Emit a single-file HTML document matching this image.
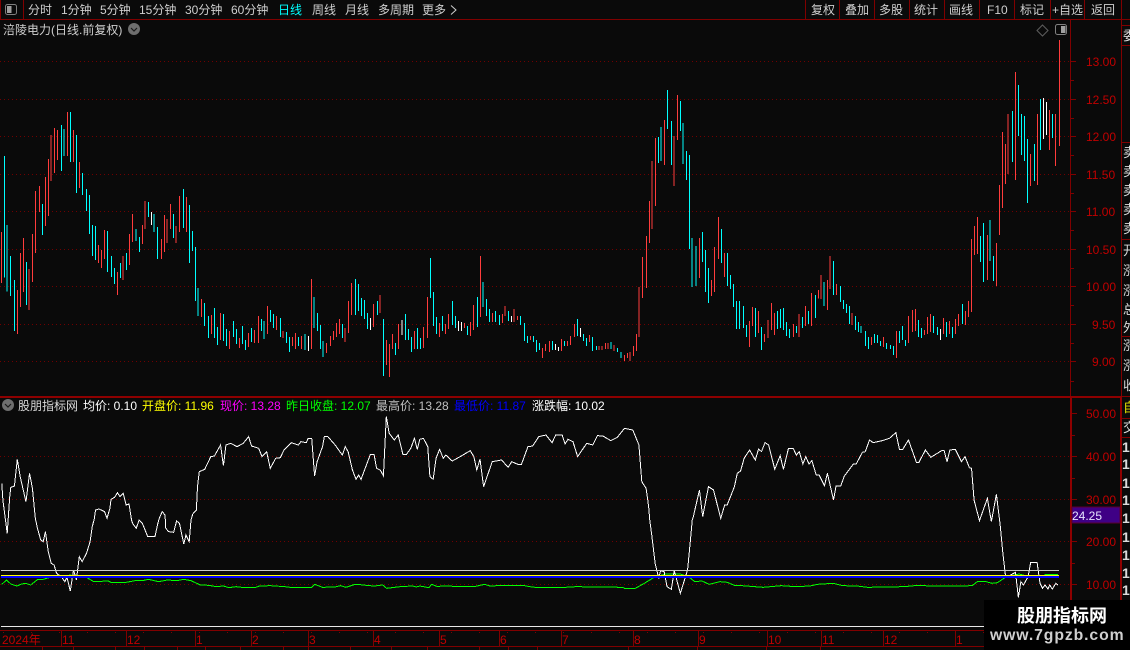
<!DOCTYPE html>
<html lang="zh"><head><meta charset="utf-8"><title>涪陵电力</title>
<style>
html,body{margin:0;padding:0;background:#0a0a0a;width:1130px;height:650px;overflow:hidden}
svg{display:block}
text{font-family:"Liberation Sans","WenQuanYi Zen Hei","Noto Sans CJK SC",sans-serif;font-size:12px;white-space:pre}
.m text{fill:#cfcfcf}
.a text{fill:#c00000}
.s text{fill:#dcdcdc;font-size:13px}
.l{shape-rendering:crispEdges;fill:none}
.c{shape-rendering:crispEdges;fill:none;stroke-width:1;vector-effect:non-scaling-stroke}
</style></head><body>
<svg width="1130" height="650" viewBox="0 0 1130 650" xmlns="http://www.w3.org/2000/svg">
<rect width="1130" height="650" fill="#0a0a0a"/>

<!-- grid -->
<path class="l" stroke="#700000" stroke-dasharray="1 3" d="M0 61.5H1070M0 99.5H1070M0 136.5H1070M0 174.5H1070M0 211.5H1070M0 249.5H1070M0 286.5H1070M0 324.5H1070M0 361.5H1070M0 456.5H1070M0 499.5H1070M0 541.5H1070M0 584.5H1070"/>

<!-- frame lines -->
<path class="l" stroke="#800000" d="M0 19.5H1130M0.5 0V19M23.5 0V19M805.5 0V19M839.5 0V19M874.5 0V19M909.5 0V19M944.5 0V19M979.5 0V19M1014.5 0V19M1050.5 0V19M1084.5 0V19M1121.5 0V650M1070.5 19V396M1121 25.5H1130M1121 45.5H1130M1121 142.5H1130M1121 239.5H1130M1121 336.5H1130M1121 396.5H1130M1121 418.5H1130M1121 437.5H1130"/>
<path class="l" stroke="#8e0000" stroke-width="2" d="M0 397H1122M1071 396V630M1121 396V630"/>
<path class="l" stroke="#800000" d="M1071 61.5H1076M1071 99.5H1076M1071 136.5H1076M1071 174.5H1076M1071 211.5H1076M1071 249.5H1076M1071 286.5H1076M1071 324.5H1076M1071 361.5H1076M1071 80.5H1074M1071 118.5H1074M1071 155.5H1074M1071 193.5H1074M1071 230.5H1074M1071 268.5H1074M1071 305.5H1074M1071 343.5H1074M1071 381.5H1074M1072 413.5H1077M1072 456.5H1077M1072 499.5H1077M1072 541.5H1077M1072 584.5H1077M1072 435.5H1075M1072 478.5H1075M1072 520.5H1075M1072 563.5H1075M1072 606.5H1075"/>

<!-- top menu -->
<rect x="5.5" y="4.5" width="11" height="10" rx="2" fill="none" stroke="#808080"/>
<rect x="7" y="6" width="4.5" height="7" fill="#a0a0a0"/>
<g class="m">
<text x="28" y="14">分时</text>
<text x="61" y="14">1分钟</text>
<text x="100" y="14">5分钟</text>
<text x="139" y="14">15分钟</text>
<text x="185" y="14">30分钟</text>
<text x="231" y="14">60分钟</text>
<text x="278" y="14" style="fill:#00ffff">日线</text>
<text x="312" y="14">周线</text>
<text x="345" y="14">月线</text>
<text x="378" y="14">多周期</text>
<text x="422" y="14">更多</text>
<path d="M451 5.5L456 10L451 14.5" fill="none" stroke="#cfcfcf"/>
<text x="811" y="14">复权</text>
<text x="845" y="14">叠加</text>
<text x="879" y="14">多股</text>
<text x="914" y="14">统计</text>
<text x="949" y="14">画线</text>
<text x="987" y="14">F10</text>
<text x="1020" y="14">标记</text>
<text x="1052" y="14">+自选</text>
<text x="1091" y="14">返回</text>
</g>

<!-- stock title -->
<text x="3" y="34" fill="#cfcfcf">涪陵电力(日线.前复权)</text>
<circle cx="134" cy="29" r="6" fill="#6e6e6e"/><path d="M131 28L134 31L137 28" fill="none" stroke="#1a1a1a" stroke-width="1.2"/>
<path d="M1042.5 25L1048 30.5L1042.5 36L1037 30.5Z" fill="none" stroke="#5e5e5e"/>
<rect x="1055.5" y="24.5" width="11" height="10" rx="2" fill="none" stroke="#808080"/>
<rect x="1061" y="26" width="4.5" height="7" fill="#a0a0a0"/>

<!-- price labels -->
<g class="a">
<text x="1086" y="66">13.00</text><text x="1086" y="104">12.50</text><text x="1086" y="141">12.00</text><text x="1086" y="179">11.50</text><text x="1086" y="216">11.00</text><text x="1086" y="254">10.50</text><text x="1086" y="291">10.00</text><text x="1092" y="329">9.50</text><text x="1092" y="366">9.00</text>
<text x="1086" y="418">50.00</text><text x="1086" y="461">40.00</text><text x="1086" y="504">30.00</text><text x="1086" y="546">20.00</text><text x="1086" y="589">10.00</text>
</g>

<!-- candles left -->
<g transform="translate(0 200) scale(.36036 .33333)">
<path class="c" stroke="#ff3c3c" d="M4 96V249M48 270V402M57 159V321M65 114V276M81 207V330M90 102V246M98 -27V159M109 -42V36M126 -69V78M134 -123V48M142 -195V-57M151 -216V-81M159 -210V-120M187 -264V-132M204 -210V-114M220 -114V-36M273 135V189M281 150V204M290 90V177M326 216V285M342 168V240M360 102V195M367 42V126M395 75V132M403 3V87M448 117V177M456 45V156M464 57V129M473 12V87M489 78V129M498 -12V96M517 -9V96M559 297V351M587 345V402M612 339V420M637 393V447M664 414V444M689 399V441M706 390V429M717 348V429M742 318V402M767 348V390M786 393V414M811 411V438M820 399V447M836 408V447M864 237V447M906 429V459M917 408V438M925 393V420M934 369V411M942 357V402M958 384V426M967 303V399M975 249V345M1036 312V381M1055 285V339M1072 420V495M1081 432V531M1089 402V447M1106 372V447M1150 393V447M1175 381V444M1186 291V414M1219 369V411M1236 372V402M1245 342V387M1289 369V384M1305 366V408M1314 315V390M1333 168V351M1366 339V366M1394 342V369M1402 318V348M1427 327V366M1436 348V360M1472 408V420M1505 444V474M1514 432V453M1525 423V456M1558 417V453"/>
<path class="c" stroke="#00ffff" d="M12 -132V233M20 75V275M29 168V288M40 240V393M73 186V315M118 12V105M170 -225V-87M178 -213V-132M195 -264V-114M212 -195V-21M229 -81V-15M240 -33V33M248 -15V102M256 75V168M265 78V180M298 93V216M309 168V231M318 204V252M334 189V234M351 159V210M378 87V123M387 111V156M412 6V51M428 42V96M437 81V177M481 42V114M509 -33V84M526 15V189M534 93V153M543 141V303M550 264V348M567 309V378M578 348V414M595 324V414M603 381V435M620 342V423M628 387V438M648 363V411M656 387V432M673 378V432M681 420V450M698 384V426M725 357V393M733 363V417M750 330V366M759 342V384M778 354V411M795 396V429M803 411V456M828 411V438M847 402V450M872 291V384M881 339V393M889 375V447M897 423V471M950 372V414M986 237V345M995 252V333M1003 294V348M1011 300V357M1020 339V387M1047 303V345M1064 357V528M1097 429V465M1125 342V420M1133 387V420M1142 411V456M1159 384V447M1167 414V447M1194 174V294M1203 276V378M1211 351V402M1228 348V393M1255 303V375M1264 348V384M1297 378V405M1325 291V381M1341 246V321M1350 297V348M1358 327V366M1375 333V366M1386 345V375M1411 333V363M1444 348V375M1455 369V423M1464 408V429M1481 408V426M1489 420V456M1497 429V450M1533 423V450M1566 423V438"/>
<path class="c" stroke="#ffffff" d="M420 36V75M856 408V453M1028 354V390M1116 360V405M1272 363V393M1280 366V393M1419 348V366M1541 432V450M1550 441V453"/>
</g>
<!-- candles right -->
<g transform="translate(565 200) scale(.36036 .33333)">
<path class="c" stroke="#ff3c3c" d="M7 423V438M15 408V435M26 372V411M68 405V426M95 438V450M103 438V450M112 429V447M120 429V447M136 435V453M165 465V483M173 459V474M181 456V483M190 438V468M198 402V453M206 261V411M215 171V294M226 108V264M234 3V129M242 -117V87M251 -186V18M276 -240V-105M303 -192V-42M312 -315V-180M373 114V234M406 240V288M415 141V276M426 51V177M442 159V231M512 363V441M520 321V378M537 333V399M553 402V426M564 360V414M573 309V390M581 339V405M634 372V411M650 342V411M667 318V378M684 279V378M703 270V295M711 225V297M728 240V330M736 168V267M753 252V285M797 339V375M851 411V435M884 411V441M920 393V474M953 348V429M964 330V396M972 327V393M998 390V405M1006 351V402M1014 342V396M1050 354V402M1067 363V402M1084 357V402M1092 342V378M1111 333V375M1120 303V351M1128 117V336M1136 78V165M1145 51V162M1172 105V240M1197 129V258M1206 -45V105M1214 -204V24M1222 -168V-48M1230 -258V-78M1250 -384V-60M1292 -138V-42M1311 -258V-45M1344 -270V-150M1361 -258V-102M1372 -480V-162"/>
<path class="c" stroke="#00ffff" d="M34 357V408M51 402V423M59 414V438M76 411V453M87 438V450M128 426V447M145 444V456M156 456V474M259 -189V-111M267 -219V-117M284 -330V-213M295 -237V-105M320 -297V-207M328 -231V-108M337 -147V-60M345 -135V147M353 114V261M364 138V258M381 96V186M390 150V276M398 204V309M434 87V189M451 159V258M459 225V267M467 252V321M476 303V387M484 303V387M495 318V384M503 375V411M528 324V411M545 381V450M590 333V387M598 327V384M606 324V390M615 366V408M623 387V414M642 378V399M659 351V384M676 333V372M695 285V354M719 246V318M745 183V285M764 258V306M773 300V327M781 312V339M789 318V372M806 348V390M814 366V396M822 378V399M834 393V438M842 411V447M859 402V429M867 405V429M876 423V438M892 429V447M903 435V447M911 438V465M928 393V429M936 378V420M945 420V438M981 360V411M989 384V414M1023 348V399M1034 381V405M1059 366V411M1075 381V414M1103 312V372M1153 108V186M1162 69V246M1180 60V183M1189 168V243M1242 -267V-114M1258 -345V-192M1267 -258V-135M1275 -252V-117M1284 -183V9M1303 -168V-57M1320 -303V-150M1353 -258V-186"/>
<path class="c" stroke="#ffffff" d="M43 384V411M1042 387V420M1328 -306V-183M1336 -294V-195"/>
</g>

<!-- indicator title -->
<circle cx="8" cy="405" r="6" fill="#6e6e6e"/><path d="M5 404L8 407L11 404" fill="none" stroke="#1a1a1a" stroke-width="1.2"/>
<text x="18" y="410" fill="#d8d8d8">股朋指标网</text>
<text x="83" y="410" fill="#ffffff">均价: 0.10</text>
<text x="142" y="410" fill="#ffff00">开盘价: 11.96</text>
<text x="220" y="410" fill="#ff00ff">现价: 13.28</text>
<text x="286" y="410" fill="#00ff00">昨日收盘: 12.07</text>
<text x="376" y="410" fill="#c0c0c0">最高价: 13.28</text>
<text x="454" y="410" fill="#0000ff">最低价: 11.87</text>
<text x="532" y="410" fill="#ffffff">涨跌幅: 10.02</text>

<g transform="translate(0 390) scale(.36036 .33333)" fill="none">
<!-- green line -->
<path class="c" stroke="#00ff00" d="M5 583L18 570L30 582L47 588L60 582L72 580L85 585L105 568L120 568L140 562L165 562L195 555L225 562L240 562L260 575L300 573L310 578L345 578L375 572L395 572L412 568L440 575L465 570L490 572L510 568L530 572L556 585L580 586L600 590L620 588L635 593L655 590L670 592L710 592L720 588L750 587L790 590L805 592L865 592L873 583L895 592L930 591L945 587L960 592L985 583L1000 584L1025 587L1040 588L1062 585L1073 595L1110 590L1145 588L1155 591L1165 588L1190 593L1198 583L1212 589L1250 588L1262 590L1320 589L1345 583L1360 588L1400 586L1450 586L1470 590L1485 592L1568 592L1598 590L1728 592L1733 595L1763 595L1788 580L1803 570L1818 560L1848 552L1888 552L1913 562L1928 575L1948 573L1968 583L1998 575L2018 577L2038 586L2058 587L2118 592L2168 587L2208 590L2248 588L2268 583L2313 580L2338 587L2378 588L2408 592L2508 590L2538 587L2658 588L2698 587L2713 574L2733 574L2753 580L2768 578L2793 560L2828 552L2858 560L2883 562L2903 553L2936 553"/>
<!-- white line -->
<path class="c" stroke="#ffffff" d="M5 280L8 330L20 430L27 320L30 292L40 288L48 208L56 260L72 335L82 250L90 295L98 385L104 415L113 450L120 455L126 425L134 485L142 520L150 525L157 550L170 560L180 575L186 562L195 603L204 540L212 570L220 500L228 515L240 490L250 455L256 410L262 385L265 360L275 357L290 365L297 385L305 355L308 328L318 322L326 308L333 320L342 310L350 345L358 342L365 390L368 400L378 415L386 390L395 400L410 440L430 440L438 400L442 385L450 365L458 375L460 415L468 425L482 427L490 393L498 400L510 462L516 435L525 455L530 390L535 372L545 360L548 290L553 245L568 238L585 200L595 198L612 165L620 227L627 165L640 160L658 170L675 160L690 140L698 168L718 175L727 200L740 185L750 235L765 205L778 203L788 180L808 158L828 165L835 155L850 158L855 145L865 145L873 258L880 215L895 170L900 140L910 140L930 165L950 195L958 170L966 185L978 240L988 268L995 255L1002 268L1015 230L1028 193L1038 193L1045 235L1055 240L1064 257L1072 80L1080 130L1094 150L1105 135L1118 193L1128 193L1140 175L1150 145L1158 178L1165 148L1175 145L1187 170L1193 260L1202 268L1210 205L1220 178L1230 205L1237 195L1255 213L1280 198L1305 182L1315 200L1323 240L1332 208L1342 290L1366 215L1392 210L1410 232L1420 215L1437 223L1447 223L1465 170L1478 168L1495 140L1515 135L1532 158L1542 135L1560 135L1568 162L1576 148L1590 155L1603 200L1628 160L1645 165L1658 137L1673 138L1695 152L1713 142L1733 115L1756 120L1773 165L1781 275L1793 295L1800 350L1803 390L1808 430L1818 520L1828 565L1833 542L1843 545L1851 590L1863 598L1871 542L1888 610L1908 540L1916 450L1921 390L1924 380L1941 300L1950 380L1966 290L1980 300L2000 385L2011 345L2018 345L2038 290L2046 250L2055 243L2065 205L2080 180L2096 210L2105 177L2113 185L2123 158L2133 165L2150 238L2165 197L2174 238L2188 175L2201 175L2210 195L2218 185L2228 222L2236 200L2245 222L2253 212L2265 255L2273 255L2288 287L2296 250L2313 330L2320 288L2333 288L2343 258L2368 222L2376 222L2393 187L2401 185L2413 150L2423 158L2448 152L2468 145L2486 128L2496 178L2505 178L2521 150L2543 217L2550 217L2568 180L2583 202L2613 182L2620 182L2628 215L2636 180L2651 178L2668 215L2678 200L2690 233L2696 235L2703 330L2718 392L2740 325L2751 395L2765 313L2775 400L2783 490L2790 555L2796 560L2818 547L2826 622L2833 575L2840 585L2853 560L2860 518L2878 518L2886 580L2893 595L2900 585L2908 597L2913 585L2920 597L2930 580L2936 585"/>
</g>

<!-- indicator horizontal lines (drawn above the curves) -->
<path class="l" stroke="#c8c8c8" d="M1 570.5H1059"/>
<path class="l" stroke="#ffff00" d="M1 575.5H1059"/>
<path class="l" stroke="#0000ff" stroke-width="2" d="M1 577H1059"/>

<!-- bottom of chart -->
<path class="l" stroke="#e8e8e8" d="M1 626.5H985"/>
<path class="l" stroke="#800000" d="M0 630.5H985M0 646.5H985"/>
<path class="l" stroke="#800000" stroke-dasharray="1 27" d="M3 632.5H985"/>
<path class="l" stroke="#800000" d="M61.5 631V646M126.5 631V646M195.5 631V646M251.5 631V646M308.5 631V646M373.5 631V646M439.5 631V646M499.5 631V646M561.5 631V646M633.5 631V646M698.5 631V646M767.5 631V646M821.5 631V646M883.5 631V646M955.5 631V646M42.5 647V650M73.5 647V650M115.5 647V650M144.5 647V650M177.5 647V650M205.5 647V650M240.5 647V650M283.5 647V650M308.5 647V650M350.5 647V650M391.5 647V650M427.5 647V650M479.5 647V650M508.5 647V650M537.5 647V650M628.5 647V650M697.5 647V650M766.5 647V650M820.5 647V650"/>
<g class="a">
<text x="2" y="644">2024年</text><text x="62" y="644">11</text><text x="127" y="644">12</text><text x="196" y="644">1</text><text x="252" y="644">2</text><text x="309" y="644">3</text><text x="374" y="644">4</text><text x="440" y="644">5</text><text x="500" y="644">6</text><text x="562" y="644">7</text><text x="634" y="644">8</text><text x="699" y="644">9</text><text x="768" y="644">10</text><text x="822" y="644">11</text><text x="884" y="644">12</text><text x="956" y="644">1</text>
</g>

<!-- purple current value -->
<rect x="1072" y="507" width="48" height="16" fill="#3f0085" stroke="#5a0030"/>
<text x="1072" y="520" fill="#e8e4ff">24.25</text>

<!-- right sidebar (clipped by page edge) -->
<g class="s">
<text x="1123" y="40">委</text>
<text x="1123" y="157">卖</text><text x="1123" y="176">卖</text><text x="1123" y="195">卖</text><text x="1123" y="214">卖</text><text x="1123" y="233">卖</text>
<text x="1123" y="255">开</text><text x="1123" y="275">涨</text><text x="1123" y="295">涨</text><text x="1123" y="314">总</text><text x="1123" y="332">外</text>
<text x="1123" y="350">涨</text><text x="1123" y="370">涨</text><text x="1123" y="390">收</text>
<text x="1123" y="412" style="fill:#e0e000">自</text>
<text x="1123" y="432">交</text>
<g style="font-weight:bold">
<text x="1122" y="452" style="font-size:14px">1</text><text x="1122" y="469" style="font-size:14px">1</text><text x="1122" y="488" style="font-size:14px">1</text><text x="1122" y="505" style="font-size:14px">1</text><text x="1122" y="523" style="font-size:14px">1</text><text x="1122" y="542" style="font-size:14px">1</text><text x="1122" y="560" style="font-size:14px">1</text><text x="1122" y="578" style="font-size:14px">1</text><text x="1122" y="595" style="font-size:14px">1</text>
</g>
</g>

<!-- watermark -->
<rect x="984" y="600" width="146" height="50" fill="#000"/>
<text x="1017" y="622" fill="#ffffff" style="font-size:18px;font-weight:bold">股朋指标网</text>
<text x="990" y="640" fill="#d0d0d0" style="font-size:15.75px;font-weight:bold;letter-spacing:.9px">www.7gpzb.com</text>
</svg>
</body></html>
